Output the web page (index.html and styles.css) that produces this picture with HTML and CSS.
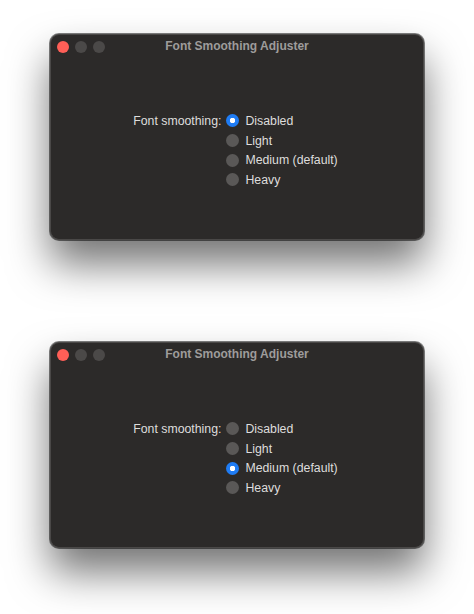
FILE: index.html
```html
<!DOCTYPE html>
<html lang="en">
<head>
    <meta charset="UTF-8">
    <meta name="viewport" content="width=device-width, initial-scale=1.0">
    <title>Font Smoothing Adjuster</title>
    <link rel="stylesheet" href="styles.css">
</head>
<body>
    <div class="window">
        <div class="titlebar">
            <div class="lights">
                <span class="light close"></span>
                <span class="light"></span>
                <span class="light"></span>
            </div>
            <div class="title">Font Smoothing Adjuster</div>
        </div>
        <div class="content">
            <div class="label">Font smoothing:</div>
            <div class="options">
                <div class="option"><span class="radio checked"></span>Disabled</div>
                <div class="option"><span class="radio"></span>Light</div>
                <div class="option"><span class="radio"></span>Medium (default)</div>
                <div class="option"><span class="radio"></span>Heavy</div>
            </div>
        </div>
    </div>

    <div class="window">
        <div class="titlebar">
            <div class="lights">
                <span class="light close"></span>
                <span class="light"></span>
                <span class="light"></span>
            </div>
            <div class="title">Font Smoothing Adjuster</div>
        </div>
        <div class="content">
            <div class="label">Font smoothing:</div>
            <div class="options">
                <div class="option"><span class="radio"></span>Disabled</div>
                <div class="option"><span class="radio"></span>Light</div>
                <div class="option"><span class="radio checked"></span>Medium (default)</div>
                <div class="option"><span class="radio"></span>Heavy</div>
            </div>
        </div>
    </div>
</body>
</html>
```

FILE: styles.css
```css
html {
    background-color: #ffffff;
}
body {
    margin: 0;
    padding: 34px 0 0 50px;
    min-height: 614px;
    box-sizing: border-box;
    display: flex;
    flex-direction: column;
    gap: 102px;
    font-family: "Liberation Sans", Arial, sans-serif;
}
.window {
    width: 374px;
    height: 206px;
    box-sizing: border-box;
    background-color: #2c2a29;
    border: 1px solid #4a4847;
    border-radius: 9px;
    box-shadow: 0 0 0 1px rgba(0, 0, 0, 0.5), 0 24px 42px rgba(0, 0, 0, 0.55);
}
.titlebar {
    position: relative;
    height: 22px;
    display: flex;
    align-items: center;
    justify-content: center;
}
.lights {
    position: absolute;
    left: 6px;
    top: 6px;
    display: flex;
    gap: 6px;
}
.light {
    width: 12px;
    height: 12px;
    border-radius: 50%;
    background-color: #4b4948;
}
.light.close {
    background-color: #ff5f57;
}
.title {
    color: #9e9c9b;
    font-size: 12px;
    font-weight: bold;
}
.content {
    display: flex;
    justify-content: center;
    gap: 5px;
    padding: 54px 3px 0 0;
    color: #dedddc;
    font-size: 12.3px;
}
.label {
    line-height: 20px;
}
.options {
    display: flex;
    flex-direction: column;
}
.option {
    display: flex;
    align-items: center;
    gap: 6px;
    height: 19.7px;
}
.radio {
    width: 13px;
    height: 13px;
    border-radius: 50%;
    background-color: #5a5857;
}
.radio.checked {
    background: radial-gradient(circle, #ffffff 0 2.5px, #1f7cf4 3px);
}
```
